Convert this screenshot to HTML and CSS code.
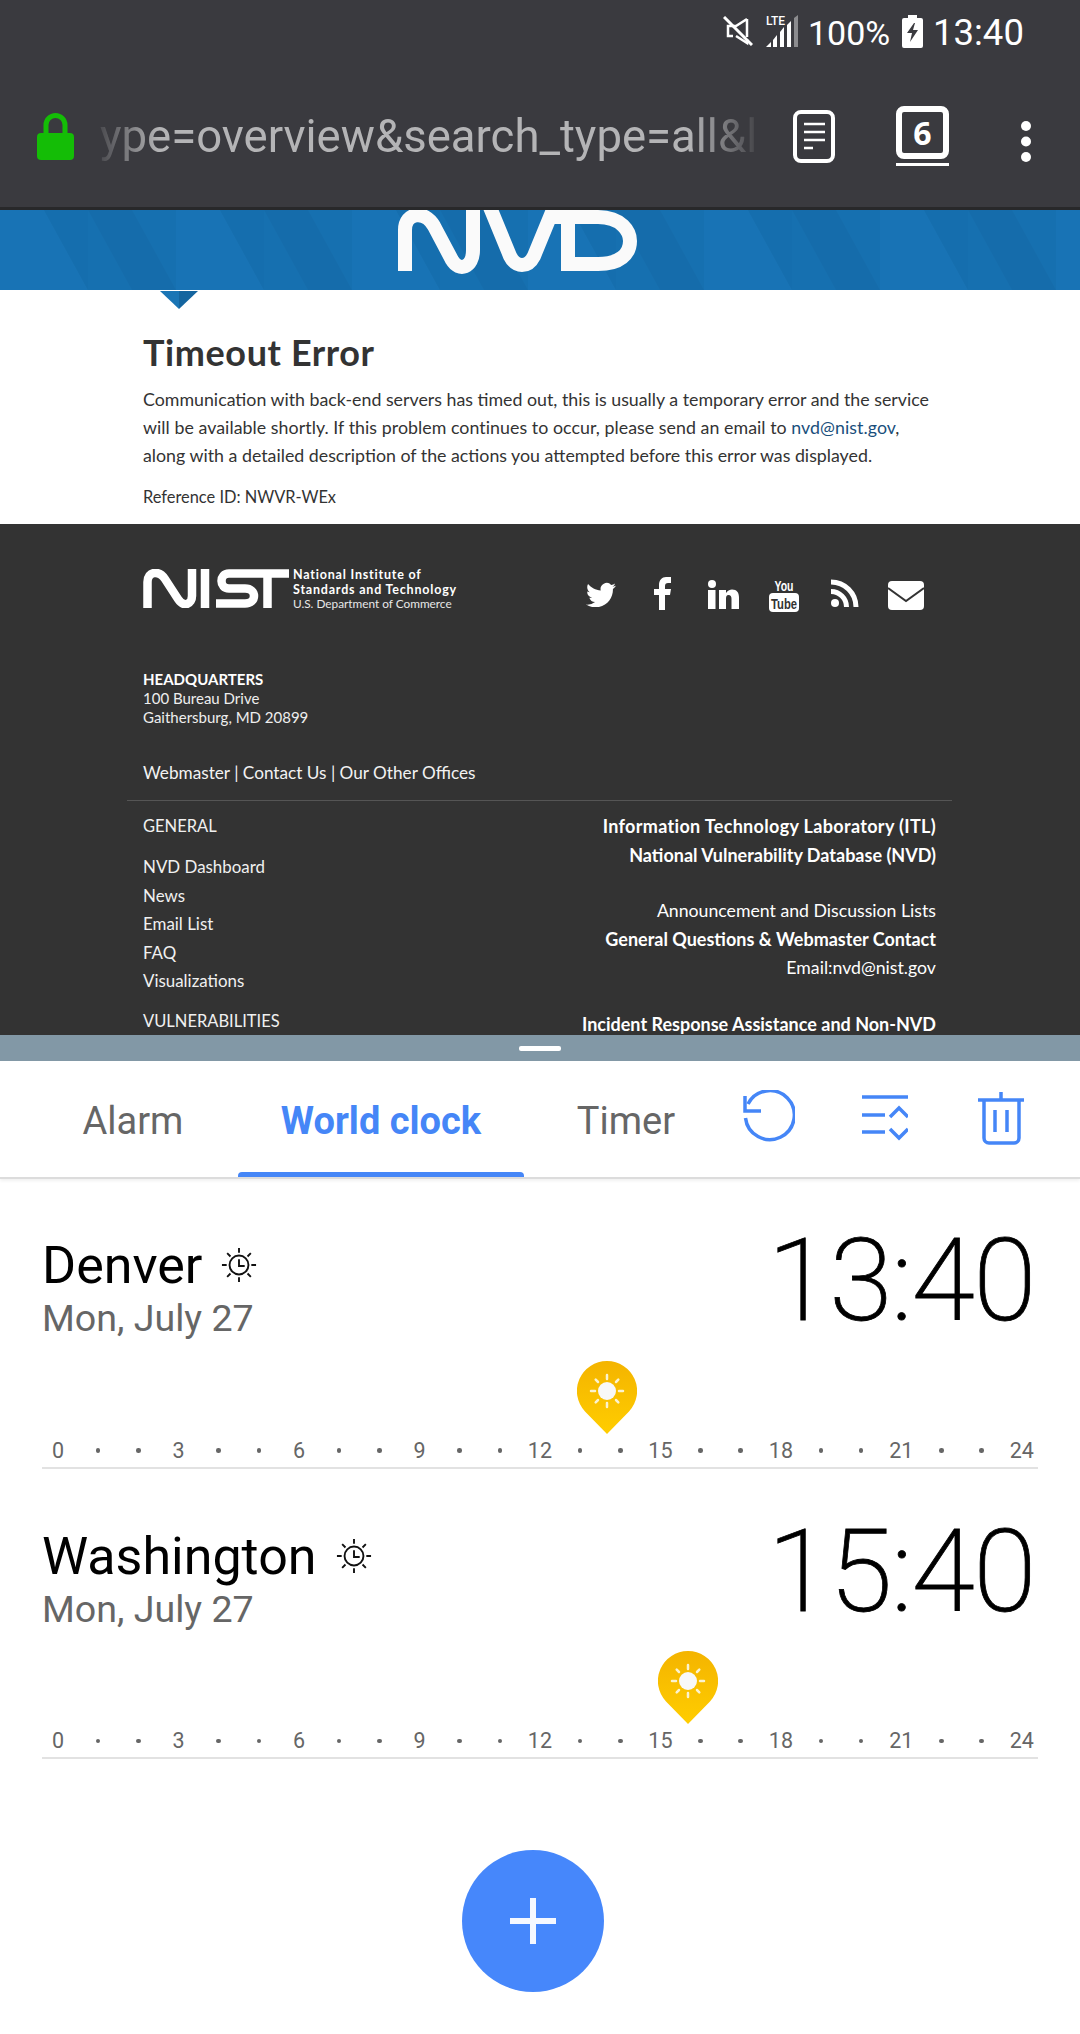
FILE: index.html
```html
<!DOCTYPE html>
<html lang="en">
<head>
<meta charset="utf-8">
<title>Split screen: NVD and World clock</title>
<link rel="stylesheet" href="styles.css">
</head>
<body>
<div class="phone">
  <header class="chrome">
    <div class="status">
      <svg class="st-mute" width="30" height="30" viewBox="0 0 30 30"><path d="M1 1 29 29" class="ln"/><path d="M24 3v18M24 3 13 10H5v10h5" class="ln thin"/><path d="M13 20l11 7v-4" class="ln thin"/></svg>
      <span class="st-signal">
        <span class="lte">LTE</span>
        <svg width="33" height="32" viewBox="0 0 33 32"><path d="M0 32 5 27V32Z" fill="#fff"/><path d="M7 32V25L11 20V32Z" fill="#fff"/><path d="M14 32V17L18 12V32Z" fill="#fff"/><path d="M21 32V10L25 6V32Z" fill="#fff"/><path d="M28 32V3L32 0V32Z" fill="#8c8c8f"/></svg>
      </span>
      <span class="st-pct">100%</span>
      <svg class="st-bat" width="21" height="33" viewBox="0 0 21 33"><path d="M6 0h9v3h4a2 2 0 0 1 2 2v26a2 2 0 0 1-2 2H2a2 2 0 0 1-2-2V5a2 2 0 0 1 2-2h4Z" fill="#fff"/><path d="M12 8 5 18h5l-2 9 8-12h-5l2-7Z" fill="#3a3a3f"/></svg>
      <span class="st-time">13:40</span>
    </div>
    <div class="urlbar">
      <svg class="lock" width="37" height="47" viewBox="0 0 37 47"><path d="M9 22V12a9.500 9.500 0 0 1 19 0v10" fill="none" stroke="#14bd06" stroke-width="5"/><rect y="20" width="37" height="27" rx="4" fill="#14bd06"/></svg>
      <div class="url"><span class="url-text">ype=overview&amp;search_type=all&amp;l</span></div>
      <svg class="reader" width="42" height="53" viewBox="0 0 42 53"><rect x="2" y="2" width="38" height="49" rx="6" fill="none" stroke="#fff" stroke-width="4"/><path d="M11 14H32M11 22H32M11 30H32M11 38H20" stroke="#fff" stroke-width="2.500"/></svg>
      <div class="tabs-btn">
        <span class="tabs-count">6</span>
      </div>
      <svg class="dots" width="10" height="41" viewBox="0 0 10 41"><circle cx="5" cy="5" r="5" fill="#fff"/><circle cx="5" cy="20.500" r="5" fill="#fff"/><circle cx="5" cy="36" r="5" fill="#fff"/></svg>
    </div>
  </header>

  <section class="web">
    <div class="band">
      <svg width="1080" height="80" viewBox="0 0 1080 80">
        <defs>
          <pattern id="tri" width="176" height="160" patternUnits="userSpaceOnUse">
            <rect width="176" height="160" fill="#1670b0"/>
            <path d="M0 0H44L88 80H0Z" fill="#1873b5"/>
            <path d="M88 0H132L176 80H132Z" fill="#156cab"/>
            <path d="M44 0H88V80Z" fill="#156eae"/>
            <path d="M0 80H44V160H0Z" fill="#156cab"/>
            <path d="M88 80 132 160H44Z" fill="#1873b5"/>
            <path d="M132 80H176V160Z" fill="#156dac"/>
          </pattern>
        </defs>
        <rect width="1080" height="80" fill="url(#tri)"/>
        <g transform="translate(0 -210)" fill="none" stroke="#fafafa" stroke-width="14">
          <path d="M405 271V230C405 212 425 210 434 226L452 260C459 272 473 268 473 250V200"/>
          <path d="M487 200 510 256C516 268 528 268 534 256L557 200"/>
          <path d="M568 271V220M548 217H598C622 217 630 232 630 241C630 254 620 264 598 264H562"/>
        </g>
      </svg>
    </div>
    <main class="error">
      <svg class="notch" width="38" height="18" viewBox="0 0 38 18"><path d="M0 0H19V18Z" fill="#1a75b5"/><path d="M19 0H38L19 18Z" fill="#14659f"/></svg>
      <h1 class="error-title">Timeout Error</h1>
      <p class="error-text"><span class="line">Communication with back-end servers has timed out, this is usually a temporary error and the service</span><span class="line line-wide">will be available shortly. If this problem continues to occur, please send an email to <a class="error-link">nvd@nist.gov</a>,</span><span class="line">along with a detailed description of the actions you attempted before this error was displayed.</span></p>
      <p class="error-ref">Reference ID: NWVR-WEx</p>
    </main>
    <footer class="foot">
      <div class="foot-top">
        <div class="nist">
          <svg width="146" height="39" viewBox="143 569 146 39" fill="none" stroke="#fff" stroke-width="8.500">
            <path d="M147.500 608V582C147.500 571 159 570 165 579L178 599C184 608 192 604 192 596V569"/>
            <path d="M205 569V608"/>
            <path d="M289 573.500H229C219 573.500 219 588.500 229 588.500H245C257 588.500 257 603.500 245 603.500H216"/>
            <path d="M267.500 573V608"/>
          </svg>
          <div class="nist-text">
            <div class="nist-b">National Institute of</div>
            <div class="nist-b">Standards and Technology</div>
            <div class="nist-l">U.S. Department of Commerce</div>
          </div>
        </div>
        <div class="social">
          <svg class="s-tw" width="30" height="25" viewBox="0 1.500 24 20"><path fill="#fff" d="M23.953 4.570a10 10 0 0 1-2.825.775 4.958 4.958 0 0 0 2.163-2.723c-.951.555-2.005.959-3.127 1.184a4.920 4.920 0 0 0-8.384 4.482C7.690 8.095 4.067 6.130 1.640 3.162a4.822 4.822 0 0 0-.666 2.475c0 1.710.870 3.213 2.188 4.096a4.904 4.904 0 0 1-2.228-.616v.060a4.923 4.923 0 0 0 3.946 4.827 4.996 4.996 0 0 1-2.212.085 4.936 4.936 0 0 0 4.604 3.417 9.867 9.867 0 0 1-6.102 2.105c-.390 0-.779-.023-1.170-.067a13.995 13.995 0 0 0 7.557 2.209c9.053 0 13.998-7.496 13.998-13.985 0-.210 0-.420-.015-.630A9.935 9.935 0 0 0 24 4.590z"/></svg>
          <svg class="s-fb" width="17" height="33" viewBox="0 0 17 33"><path fill="#fff" d="M5 33V18H0v-6h5V8c0-5 3-8 7-8h5v6h-3c-2 0-3 1-3 3v3h6l-1 6h-5v15Z"/></svg>
          <svg class="s-in" width="31" height="29" viewBox="0 0 31 29"><circle cx="4" cy="4" r="4" fill="#fff"/><rect y="10" width="7.500" height="19" fill="#fff"/><path fill="#fff" d="M11 10h7v3c2-3 4-3.500 6-3.500 5 0 7 3 7 8V29h-7.500V19c0-2.500-1-4-3-4s-2.500 1.500-2.500 4v10H11Z"/></svg>
          <svg class="s-yt" width="30" height="35" viewBox="0 0 30 35"><text x="15" y="14" class="yt-you" textLength="19" lengthAdjust="spacingAndGlyphs">You</text><rect y="16" width="30" height="19" rx="4" fill="#fff"/><text x="15" y="32" class="yt-tube" textLength="26" lengthAdjust="spacingAndGlyphs">Tube</text></svg>
          <svg class="s-rs" width="28" height="28" viewBox="0 0 28 28"><circle cx="4" cy="24" r="4" fill="#fff"/><path d="M0 12.500A15.500 15.500 0 0 1 15.500 28" fill="none" stroke="#fff" stroke-width="5"/><path d="M0 3A25 25 0 0 1 25 28" fill="none" stroke="#fff" stroke-width="5"/></svg>
          <svg class="s-ml" width="36" height="29" viewBox="0 0 36 29"><rect width="36" height="29" rx="4" fill="#fff"/><path d="M0 7 18 20 36 7" fill="none" stroke="#333" stroke-width="2"/></svg>
        </div>
      </div>
      <address class="hq">
        <strong class="hq-title">HEADQUARTERS</strong>
        <span class="hq-line">100 Bureau Drive</span>
        <span class="hq-line">Gaithersburg, MD 20899</span>
      </address>
      <div class="foot-links">Webmaster | Contact Us | Our Other Offices</div>
      <div class="foot-rule"></div>
      <div class="foot-cols">
        <div class="col-left">
          <div class="col-head">GENERAL</div>
          <div class="col-item">NVD Dashboard</div>
          <div class="col-item">News</div>
          <div class="col-item">Email List</div>
          <div class="col-item">FAQ</div>
          <div class="col-item">Visualizations</div>
          <div class="col-head col-head-next">VULNERABILITIES</div>
        </div>
        <div class="col-right">
          <div class="col-b col-wide">Information Technology Laboratory (ITL)</div>
          <div class="col-b">National Vulnerability Database (NVD)</div>
          <div class="col-r col-gap">Announcement and Discussion Lists</div>
          <div class="col-b">General Questions &amp; Webmaster Contact</div>
          <div class="col-r">Email:nvd@nist.gov</div>
          <div class="col-b col-gap">Incident Response Assistance and Non-NVD</div>
        </div>
      </div>
    </footer>
  </section>

  <div class="splitter"><span class="handle"></span></div>

  <section class="clock">
    <nav class="tabbar">
      <div class="tab tab-alarm">Alarm</div>
      <div class="tab tab-world">World clock</div>
      <div class="tab tab-timer">Timer</div>
      <div class="tab-icons">
        <div class="tab-icon"><svg width="52" height="56" viewBox="0 0 52 56" fill="none" stroke="#4586f7" stroke-width="3.500"><path d="M5 14A24.500 24.500 0 1 1 2.500 28"/><path d="M2 6V21H18"/></svg></div>
        <div class="tab-icon"><svg width="46" height="46" viewBox="0 0 46 46" fill="none" stroke="#4586f7" stroke-width="3.500"><path d="M0 2H46M0 20H23M0 37H23M28 22 37 13 46 22M28 34 37 43 46 34"/></svg></div>
        <div class="tab-icon"><svg width="46" height="54" viewBox="0 0 46 54" fill="none" stroke="#4586f7" stroke-width="3.500"><path d="M0 9H46M23 1V9M6 9V47A5 5 0 0 0 11 52H36A5 5 0 0 0 41 47V9M17 19V41M29 19V41"/></svg></div>
      </div>
    </nav>

    <article class="city">
      <div class="city-head">
        <div>
          <div class="city-name">Denver
            <svg class="sunclock" width="36" height="36" viewBox="0 0 38 38" fill="none" stroke="#111" stroke-width="2"><circle cx="19" cy="19" r="10"/><path d="M19 13V20H25M19 1V6M19 32V37M1 19H6M32 19H37M6.500 6.500 10 10M28 28 31.500 31.500M31.500 6.500 28 10M10 28 6.500 31.500"/></svg>
          </div>
          <div class="city-date">Mon, July 27</div>
        </div>
        <div class="city-time">13:40</div>
      </div>
      <div class="scale">
        <svg class="pin" style="left:56.68%" width="60" height="73" viewBox="0 0 60 73"><defs><linearGradient id="pinA" x1="0" y1="0" x2="0" y2="1"><stop offset="0" stop-color="#f4b400"/><stop offset="1" stop-color="#ffcd00"/></linearGradient></defs><path d="M30 0A30 30 0 0 1 52 50.500L30 73 8 50.500A30 30 0 0 1 30 0Z" fill="url(#pinA)"/><circle cx="30" cy="30" r="9" fill="#f8f8f8"/><path d="M30 14V18M30 42V46M14 30H18M42 30H46M18.700 18.700 21 21M39 39 41.300 41.300M41.300 18.700 39 21M21 39 18.700 41.300" stroke="#fbf3d0" stroke-width="2.500" stroke-linecap="round"/></svg>
        <span class="h">0</span><i class="d"></i><i class="d"></i><span class="h">3</span><i class="d"></i><i class="d"></i><span class="h">6</span><i class="d"></i><i class="d"></i><span class="h">9</span><i class="d"></i><i class="d"></i><span class="h">12</span><i class="d"></i><i class="d"></i><span class="h">15</span><i class="d"></i><i class="d"></i><span class="h">18</span><i class="d"></i><i class="d"></i><span class="h">21</span><i class="d"></i><i class="d"></i><span class="h">24</span>
      </div>
    </article>

    <article class="city">
      <div class="city-head">
        <div>
          <div class="city-name">Washington
            <svg class="sunclock" width="36" height="36" viewBox="0 0 38 38" fill="none" stroke="#111" stroke-width="2"><circle cx="19" cy="19" r="10"/><path d="M19 13V20H25M19 1V6M19 32V37M1 19H6M32 19H37M6.500 6.500 10 10M28 28 31.500 31.500M31.500 6.500 28 10M10 28 6.500 31.500"/></svg>
          </div>
          <div class="city-date">Mon, July 27</div>
        </div>
        <div class="city-time">15:40</div>
      </div>
      <div class="scale">
        <svg class="pin" style="left:64.68%" width="60" height="73" viewBox="0 0 60 73"><defs><linearGradient id="pinB" x1="0" y1="0" x2="0" y2="1"><stop offset="0" stop-color="#f4b400"/><stop offset="1" stop-color="#ffcd00"/></linearGradient></defs><path d="M30 0A30 30 0 0 1 52 50.500L30 73 8 50.500A30 30 0 0 1 30 0Z" fill="url(#pinB)"/><circle cx="30" cy="30" r="9" fill="#f8f8f8"/><path d="M30 14V18M30 42V46M14 30H18M42 30H46M18.700 18.700 21 21M39 39 41.300 41.300M41.300 18.700 39 21M21 39 18.700 41.300" stroke="#fbf3d0" stroke-width="2.500" stroke-linecap="round"/></svg>
        <span class="h">0</span><i class="d"></i><i class="d"></i><span class="h">3</span><i class="d"></i><i class="d"></i><span class="h">6</span><i class="d"></i><i class="d"></i><span class="h">9</span><i class="d"></i><i class="d"></i><span class="h">12</span><i class="d"></i><i class="d"></i><span class="h">15</span><i class="d"></i><i class="d"></i><span class="h">18</span><i class="d"></i><i class="d"></i><span class="h">21</span><i class="d"></i><i class="d"></i><span class="h">24</span>
      </div>
    </article>

    <div class="fab-row">
      <div class="fab"><svg width="46" height="46" viewBox="0 0 46 46"><path d="M23 0V46M0 23H46" stroke="#f5f8ff" stroke-width="6"/></svg></div>
    </div>
  </section>
</div>
</body>
</html>
```
FILE: styles.css
```css
* { box-sizing: border-box; }
html, body { margin: 0; padding: 0; background: #fff; }
body { font-family: Roboto, "Liberation Sans", sans-serif; overflow: hidden; }
svg { display: block; flex: none; }
.phone { width: 1080px; height: 2034px; overflow: hidden; }

/* browser chrome */
.chrome { height: 210px; background: #3a3a3f; border-bottom: 3px solid #28282a; color: #fff; }
.status { height: 64px; padding: 15px 57px 0 723px; display: flex; align-items: flex-start; }
.ln { fill: none; stroke: #fff; stroke-width: 3; }
.ln.thin { stroke-width: 2.5; }
.st-mute { margin-top: 1px; }
.st-signal { display: block; width: 33px; height: 33px; margin-left: 13px; position: relative; }
.lte { position: absolute; left: 0; top: 0; font-size: 12px; font-weight: 500; line-height: 12px; z-index: 1; }
.st-pct { font-size: 34px; line-height: 36px; margin-left: 9px; width: 81px; white-space: nowrap; }
.st-bat { margin-left: 13px; }
.st-time { font-size: 36.5px; line-height: 36px; margin-left: 10px; white-space: nowrap; }

.urlbar { height: 143px; padding: 42px 0 0 37px; display: flex; align-items: flex-start; }
.lock { margin-top: 7px; }
.url { width: 656px; margin-left: 26px; height: 61px; padding-top: 1px; overflow: hidden; font-size: 45.5px; line-height: 60px; white-space: nowrap; color: #b4b4b6;
  -webkit-mask-image: linear-gradient(90deg, rgba(0,0,0,.15), #000 9%, #000 90%, rgba(0,0,0,.1)); mask-image: linear-gradient(90deg, rgba(0,0,0,.15), #000 9%, #000 90%, rgba(0,0,0,.1)); }
.reader { margin-left: 37px; margin-top: 4px; }
.tabs-btn { width: 53px; height: 60px; margin-left: 61px; border-bottom: 3px solid #fff; padding-bottom: 4px; background: none; position: relative; }
.tabs-count { display: flex; align-items: center; justify-content: center; width: 53px; height: 53px; border: 6px solid #fff; border-radius: 8px; font-family: "Open Sans", sans-serif; font-weight: 700; font-size: 32px; line-height: 1; }
.dots { margin-left: 72px; margin-top: 15px; }

/* web page */
.web { height: 825px; overflow: hidden; background: #fff; }
.band { height: 80px; }
.error { height: 234px; padding: 42px 100px 0 143px; position: relative; font-family: Lato, "Open Sans", sans-serif; color: #333; }
.notch { position: absolute; left: 160px; top: 1px; }
.error-title { margin: 0 0 13px; font-size: 36px; line-height: 40px; font-weight: 700; letter-spacing: .6px; }
.error-text { margin: 0 0 14px; font-size: 17.8px; line-height: 28px; }
.line { display: block; white-space: nowrap; }
.line-wide { letter-spacing: .05px; }
.error-link { color: #1a4f7c; }
.error-ref { margin: 0; font-size: 16.4px; line-height: 28px; }

.foot { height: 520px; background: #333; padding: 45px 144px 0 143px; color: #fff; font-family: Lato, "Open Sans", sans-serif; }
.foot-top { display: flex; justify-content: space-between; height: 39px; }
.nist { display: flex; align-items: flex-start; gap: 4px; }
.nist-text { font-size: 12.5px; line-height: 14.5px; margin-top: -1px; white-space: nowrap; }
.nist-b { font-weight: 700; letter-spacing: .8px; }
.nist-l { font-size: 11.8px; font-weight: 400; color: #e8e8e8; }
.social { width: 350px; height: 39px; display: flex; }
.s-tw { margin: 13px 0 0 0; }
.s-fb { margin: 8px 0 0 38px; }
.s-in { margin: 11px 0 0 37px; }
.s-yt { margin: 8px 0 0 30px; overflow: visible; }
.yt-you { font-family: "Liberation Sans", sans-serif; font-size: 15px; font-weight: 700; fill: #fff; text-anchor: middle; }
.yt-tube { font-family: "Liberation Sans", sans-serif; font-size: 15px; font-weight: 700; fill: #333; text-anchor: middle; }
.s-rs { margin: 10px 0 0 32px; }
.s-ml { margin: 12px 0 0 29px; }
.hq { font-style: normal; margin-top: 61.5px; font-size: 15px; line-height: 19px; color: #eee; }
.hq-title { display: block; color: #fff; }
.hq-line { display: block; }
.foot-links { margin-top: 34px; font-size: 17.2px; line-height: 24px; color: #f2f2f2; }
.foot-rule { height: 1px; background: #555; margin: 15.5px -16px 0 -16px; }
.foot-cols { display: flex; justify-content: space-between; margin-top: 11px; font-size: 16.9px; line-height: 28.5px; }
.col-left { color: #f0f0f0; }
.col-head { font-size: 16.5px; }
.col-head + .col-item { margin-top: 12.5px; }
.col-head-next { margin-top: 11.500px; }
.col-right { text-align: right; }
.col-r { font-size: 17.7px; }
.col-b { font-size: 18px; font-weight: 700; }
.col-wide { letter-spacing: .33px; }
.col-gap { margin-top: 27.5px; }

.splitter { height: 26px; background: #8298a6; display: flex; justify-content: center; padding-top: 11px; }
.handle { display: block; width: 42px; height: 5px; background: #fff; border-radius: 2px; }

/* clock */
.clock { background: #fff; }
.tabbar { height: 118px; display: flex; border-bottom: 2px solid #dcdcdc; box-shadow: 0 2px 3px rgba(0,0,0,.06); font-size: 38px; color: #666; }
.tab { height: 116px; display: flex; align-items: center; justify-content: center; padding-top: 3px; }
.tab-alarm { width: 238px; padding-left: 28px; }
.tab-world { width: 286px; font-weight: 700; color: #4586f7; position: relative; }
.tab-world::after { content: ""; position: absolute; left: 0; right: 0; bottom: 0; height: 5px; background: #4586f7; border-radius: 4px 4px 0 0; }
.tab-timer { width: 187px; padding-left: 17px; }
.tab-icons { display: flex; }
.tab-icon { width: 116px; height: 116px; display: flex; align-items: center; justify-content: center; padding-bottom: 2px; }

.city { padding: 57px 0 0 42px; width: 1038px; height: 290.5px; }
.city-head { display: flex; justify-content: space-between; height: 104.5px; }
.city-name { font-size: 52px; line-height: 60px; color: #000; display: flex; align-items: center; gap: 19px; white-space: nowrap; }
.sunclock { margin-top: -2px; }
.city-date { font-size: 37.6px; line-height: 44px; color: #666; white-space: nowrap; }
.city-time { font-size: 115px; line-height: 89px; font-weight: 200; -webkit-text-stroke: .8px #000; color: #000; letter-spacing: -1.5px; margin-right: 3px; white-space: nowrap; }
.scale { margin: 96px 0 0 -4px; width: 1004.25px; height: 28px; display: grid; grid-template-columns: repeat(25, 40.17px); align-items: center; justify-items: center; position: relative; font-size: 21.5px; color: #666; }
.scale::after { content: ""; position: absolute; left: 4px; right: 4px; top: 30px; height: 2px; background: #e2e2e2; }
.h { line-height: 28px; }
.d { display: block; width: 4.5px; height: 4.5px; border-radius: 50%; background: #666; }
.pin { position: absolute; top: -76px; transform: translateX(-50%); }

.fab-row { display: flex; justify-content: center; padding: 90px 14px 0 0; }
.fab { width: 142px; height: 142px; border-radius: 50%; background: #4687fb; display: flex; align-items: center; justify-content: center; }
```
